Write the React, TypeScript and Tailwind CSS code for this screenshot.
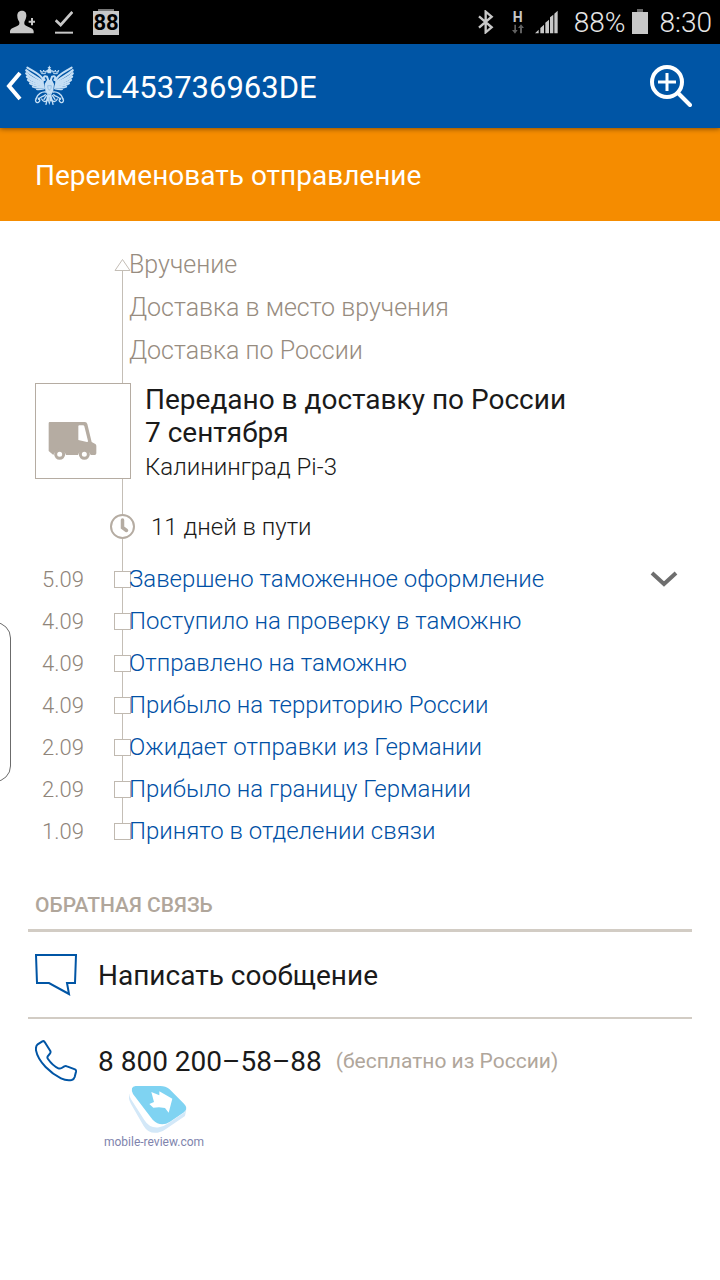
import type { ReactNode } from 'react';

interface HistoryItem {
  date: string;
  title: string;
}

const upcoming = ['Вручение', 'Доставка в место вручения', 'Доставка по России'];

const history: HistoryItem[] = [
  { date: '5.09', title: 'Завершено таможенное оформление' },
  { date: '4.09', title: 'Поступило на проверку в таможню' },
  { date: '4.09', title: 'Отправлено на таможню' },
  { date: '4.09', title: 'Прибыло на территорию России' },
  { date: '2.09', title: 'Ожидает отправки из Германии' },
  { date: '2.09', title: 'Прибыло на границу Германии' },
  { date: '1.09', title: 'Принято в отделении связи' },
];

function StatusBar() {
  return (
    <div className="flex h-11 items-center justify-between bg-black pl-2.5 pr-2 text-[#c8c8c8]">
      <div className="flex items-center gap-5">
        <svg width="25" height="24" viewBox="0 0 75 72" fill="currentColor">
          <path d="M36 2c10 0 14 7 13 17-1 8-4 12-6 17v6c2 8 28 10 28 22v6H0v-6c0-12 26-14 28-22v-6c-3-5-6-9-6-17C21 9 26 2 36 2z" />
          <path d="M63 24h6v8h6v6h-6v8h-6v-8h-7v-6h7z" />
        </svg>
        <svg width="18" height="24" viewBox="0 0 54 72" fill="none" stroke="currentColor">
          <path d="M2 31l15 14L52 6" strokeWidth="8" />
          <path d="M0 68h54" strokeWidth="6" />
        </svg>
        <div className="flex flex-col items-center">
          <span className="h-0.5 w-4 bg-[#777777]" />
          <span className="flex h-6 w-[26px] items-center justify-center bg-[#c8c8c8] text-[22px] font-bold leading-6 text-black">
            88
          </span>
        </div>
      </div>
      <div className="flex items-center text-[28px] font-light leading-8 text-[#e6e6e6]">
        <svg width="16" height="24" viewBox="0 0 48 72" fill="none" stroke="#c8c8c8" strokeWidth="7">
          <path d="M3 19l38 33-18 15V5l18 15L3 53" />
        </svg>
        <div className="ml-[18px] flex w-3 flex-col items-center">
          <span className="text-sm font-bold leading-3.5 text-[#c8c8c8]">H</span>
          <svg width="12" height="10" viewBox="0 0 36 30" fill="#606060">
            <path d="M7 2h5v16h5L9 29 0 18h7zM24 28V12h-6L27 1l9 11h-6v16z" />
          </svg>
        </div>
        <svg className="ml-2.5" width="24" height="24" viewBox="0 0 72 72" fill="#c8c8c8">
          <path d="M3 70l11-11v11zM19 70V54l11-10v26zM34 70V38l11-9v41zM48 70V22l10-8v56zM61 70V11l10-9v68z" />
        </svg>
        <span className="ml-4 pt-0.5">88%</span>
        <svg className="ml-1.5" width="16" height="26" viewBox="0 0 16 26">
          <path d="M5 0h6v4H5z" fill="#666666" />
          <path d="M0 3h16v22H0z" fill="#c8c8c8" />
        </svg>
        <span className="ml-3 pt-0.5">8:30</span>
      </div>
    </div>
  );
}

function EagleWing() {
  return (
    <g fill="none" stroke="currentColor" strokeLinecap="round">
      <path d="M82 203C100 215 122 222 130 240" strokeWidth="6" />
      <path d="M79 211C95 226 112 232 128 245" strokeWidth="7" />
      <path d="M79 220C92 234 108 240 128 249" strokeWidth="7" />
      <path d="M81 230C94 243 109 246 129 253" strokeWidth="7" />
      <path d="M84 240C96 251 111 252 130 257" strokeWidth="7" />
      <path d="M90 250C101 258 114 258 131 260" strokeWidth="6" />
      <path d="M98 260C108 265 119 264 132 263" strokeWidth="5" />
      <path d="M110 268C118 270 125 268 133 266" strokeWidth="4" />
      <path d="M134 240C128 233 132 226 141 230L146 244" strokeWidth="6" />
      <path d="M121 212l4 9h11l4-9-7 4-2-6-2 6z" strokeWidth="3" />
      <path d="M138 276C126 274 112 282 108 296" strokeWidth="4" />
      <path d="M136 284C128 292 122 288 116 298M109 296c-6 6 0 14 6 11s6-10-1-13" strokeWidth="4" />
      <path d="M125 297c4 8 10 10 17 4M140 286l-8 12M141 300l-3 13" strokeWidth="4" />
    </g>
  );
}

function Eagle() {
  return (
    <svg className="text-[#c5dff5]" width="50" height="42" viewBox="75 195 150 126">
      <EagleWing />
      <g transform="translate(297 0) scale(-1 1)">
        <EagleWing />
      </g>
      <path
        d="M148 196l2 5 4 1-4 3 6 7-3 8h-10l-3-8 6-7-4-3 4-1zM141 240h15l6 12-2 20-6 12 5 22-7-3-4 12-4-12-7 3 5-22-6-12-2-20z"
        fill="currentColor"
      />
      <path d="M143 257h11l-1 8-5 6-4-6zM143 280l5 5 5-5M148 292v14" fill="none" stroke="#7fb0dc" strokeWidth="2" />
    </svg>
  );
}

function AppBar() {
  return (
    <header className="relative z-10 flex h-[84px] items-center justify-between bg-[#0055a5] pl-1.5 pr-7 text-white shadow-[0_1px_5px_rgba(0,0,0,0.45)]">
      <div className="flex items-center">
        <button type="button" aria-label="Назад" className="flex items-center">
          <svg width="19" height="32" viewBox="0 0 19 32" fill="none" stroke="currentColor" strokeWidth="4">
            <path d="M14 3L3 16l11 13" />
          </svg>
          <Eagle />
        </button>
        <h1 className="ml-2.5 pt-1 text-[31px] leading-9">CL453736963DE</h1>
      </div>
      <button type="button" aria-label="Найти отправление">
        <svg width="43" height="43" viewBox="0 0 43 43" fill="none" stroke="currentColor" strokeWidth="4">
          <circle cx="18" cy="17" r="15" />
          <path d="M29 28l12 12" strokeLinecap="round" />
          <path d="M9 17h18M18 8v18" strokeWidth="3" />
        </svg>
      </button>
    </header>
  );
}

function Line({ className }: { className: string }) {
  return <span className={`w-px bg-[#c4beb6] ${className}`} />;
}

function Rail({ top = true, bottom = true, children }: { top?: boolean; bottom?: boolean; children: ReactNode }) {
  return (
    <span className="flex flex-col items-center self-stretch">
      <Line className={top ? 'flex-1' : 'flex-1 opacity-0'} />
      {children}
      <Line className={bottom ? 'flex-1' : 'flex-1 opacity-0'} />
    </span>
  );
}

function Timeline() {
  return (
    <section className="pt-[22px]">
      <ul className="text-[25px] text-[#978c80]">
        {upcoming.map((title, i) => (
          <li key={title} className="grid h-[43px] grid-cols-[114px_17px_1fr] items-center">
            <span />
            {i === 0 ? (
              <Rail top={false}>
                <svg width="17" height="12" viewBox="0 0 17 12" fill="none" stroke="#c4beb6">
                  <path d="M8.500 .5l7.500 11H1z" />
                </svg>
              </Rail>
            ) : (
              <Rail>{null}</Rail>
            )}
            <span className="-ml-0.5 font-light">{title}</span>
          </li>
        ))}
      </ul>

      <div className="flex pl-[35px]">
        <div className="flex w-24 flex-col">
          <Line className="ml-[87px] h-[11px]" />
          <div className="flex size-24 items-center border border-[#b5aca2] pl-3">
            <svg className="mt-5" width="50" height="38" viewBox="0 0 150 114">
              <path
                d="M5 0h106q5 0 7 6l13 54 11 6q3 2 3 6v22q0 5-5 5h-12a20 20 0 0 0-38 0H54a20 20 0 0 0-38 0L2 87V4q0-4 3-4zM94 10q-3 0-3 3v41l26 6q4 0 3-3L109 13q-1-3-4-3z"
                fill="#b5aca2"
                fillRule="evenodd"
              />
              <g fill="#ffffff" stroke="#b5aca2" strokeWidth="9">
                <circle cx="35" cy="97" r="12" />
                <circle cx="109" cy="97" r="12" />
              </g>
            </svg>
          </div>
          <Line className="ml-[87px] flex-1" />
        </div>
        <div className="pb-2.5 pl-3.5 pt-[11px] text-[28px] leading-[33px] text-[#1a1a1a]">
          <h2>
            Передано в доставку по России
            <br />7 сентября
          </h2>
          <p className="pt-0.5 text-2xl font-light leading-[33px]">Калининград Pi-3</p>
        </div>
      </div>

      <div className="grid h-16 grid-cols-[110px_25px_1fr] items-center">
        <span />
        <Rail>
          <svg width="25" height="25" viewBox="0 0 25 25" fill="none" stroke="#b5aca2">
            <circle cx="12.500" cy="12.500" r="11.500" strokeWidth="2" />
            <path d="M12.500 6v7.500l4 3" strokeWidth="3.500" strokeLinecap="round" />
          </svg>
        </Rail>
        <span className="ml-4 pt-0.5 text-2xl font-light text-[#1a1a1a]">11 дней в пути</span>
      </div>

      <ol>
        {history.map((item, i) => (
          <li key={item.title} className="grid h-[42px] grid-cols-[114px_17px_1fr_auto] items-center">
            <time className="pl-[42px] text-[22px] font-light text-[#8f857a]">{item.date}</time>
            <Rail bottom={i < history.length - 1}>
              <span className="size-[17px] border border-[#c0b9b0] bg-white" />
            </Rail>
            <a href="#" className="-ml-0.5 text-2xl font-light text-[#0050a5]">
              {item.title}
            </a>
            {i === 0 && (
              <button type="button" aria-label="Свернуть историю" className="mr-[42px]">
                <svg width="28" height="16" viewBox="0 0 28 16" fill="none" stroke="#6e6e6e" strokeWidth="4">
                  <path d="M2 2l12 11L26 2" />
                </svg>
              </button>
            )}
          </li>
        ))}
      </ol>
    </section>
  );
}

function Feedback() {
  return (
    <section className="mx-7 pt-10">
      <h2 className="border-b-3 border-[#d2ccc4] pb-[11px] pl-[7px] text-[21px] font-medium leading-[26px] text-[#b0a69b]">
        ОБРАТНАЯ СВЯЗЬ
      </h2>
      <a
        href="#"
        className="flex h-[87px] items-center gap-5 border-b-2 border-[#d2ccc4] pl-[7px] text-[28px] text-[#1a1a1a]"
      >
        <svg width="43" height="42" viewBox="0 0 43 42" fill="none" stroke="#0055a5" strokeWidth="2">
          <path d="M1 1h40l-1 28h-8l2 11-20-11H2z" />
        </svg>
        <span className="pt-0.5">Написать сообщение</span>
      </a>
      <div className="flex h-16 items-center pl-[7px] pt-5">
        <svg width="43" height="42" viewBox="0 0 129 126" fill="none" stroke="#0055a5" strokeWidth="6" strokeLinejoin="round">
          <path d="M8 13L22 4q4-2 7 2l17 27q2 4-2 9l-6 7q-2 4 1 8 14 20 31 28 5 2 10-1l8-5q4-2 8 0l24 9q4 2 3 7l-4 16q-2 7-9 9-16 3-32-5C48 100 10 67 3 31 2 22 3 17 8 13z" />
        </svg>
        <a href="tel:88002005888" className="ml-5 pt-0.5 text-[28px] text-[#1a1a1a]">
          8 800 200–58–88
        </a>
        <span className="ml-3.5 pt-0.5 text-[21px] text-[#b0a69b]">(бесплатно из России)</span>
      </div>
    </section>
  );
}

function Watermark() {
  return (
    <div className="ml-[104px] mt-[3px] flex w-[100px] flex-col items-center">
      <svg className="ml-2.5" width="60" height="48" viewBox="0 0 180 144">
        <path d="M0 24Q-3 38 6 54l38 66q14 24 42 20 14-2 26-12l56-38 4-20L90 110 16 18z" fill="#d3e8f8" />
        <path d="M4 10Q-4 24 6 40l40 62q16 26 44 22 14-2 28-12l50-34 5-16L20 4z" fill="#ffffff" />
        <path d="M20 0h74q16 0 27 9l44 44q14 14 0 26l-42 28q-28 18-52-6L12 24Q2 2 20 0z" fill="#7fd3f2" />
        <path d="M67 18l24 10V16l39 22-11 42-11-14-18-2-17 1-12-11 14-6z" fill="#ffffff" />
      </svg>
      <span className="whitespace-nowrap text-xs leading-4 text-[#8084ad]">mobile-review.com</span>
    </div>
  );
}

export default function App() {
  return (
    <div className="relative min-h-screen overflow-hidden bg-white font-[Roboto,sans-serif]">
      <StatusBar />
      <AppBar />
      <button
        type="button"
        className="flex h-[93px] w-full items-center bg-[#f58c00] pl-[35px] pt-0.5 text-left text-[28px] text-white"
      >
        Переименовать отправление
      </button>
      <main>
        <Timeline />
        <Feedback />
      </main>
      <Watermark />
      {/* edge panel handle */}
      <div className="absolute -left-4 top-[622px] h-40 w-[27px] rounded-r-2xl border border-[#6b6b6b]" />
    </div>
  );
}
